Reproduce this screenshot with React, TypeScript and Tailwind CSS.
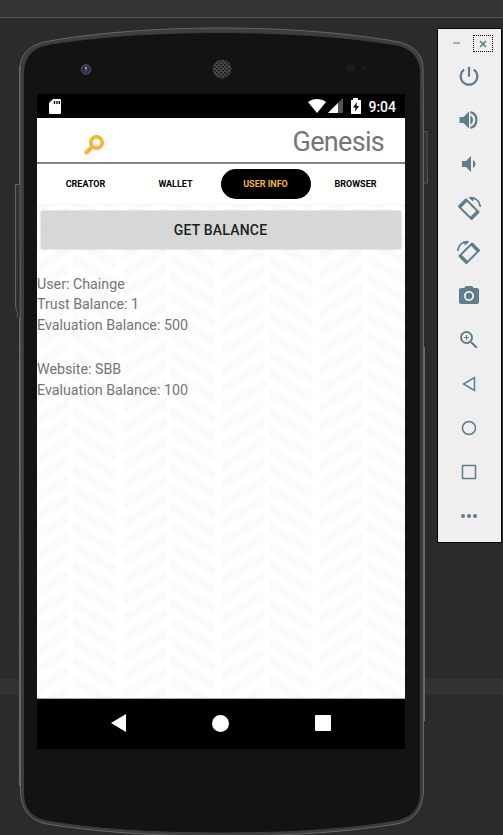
import type { ReactNode } from "react";
import { MdPhotoCamera, MdVolumeDown, MdZoomIn } from "react-icons/md";

function PhoneShell() {
  const outline =
    "M222 28 C286 28 350 33 399 42 C415 46 422 55 423 66 L423.5 130 L423.5 790 C423 810 414 820 399 823.5 C350 832 286 836 222 836 C155 836 95 832 44 823.5 C29 819 21 810 20.5 790 L20 66 C21 55 28 46 44 42 C92 33 155 28 222 28 Z";
  const face =
    "M222 32.500 C286 32.500 348 36.500 397 45 C411 48 419 57 420.500 70 L420.500 795 C420 809 411 818 397 821 C348 829.500 286 833 222 833 C155 833 95 829.500 46 821 C32 818 24 809 23.500 795 L23.500 70 C25 57 32 48 46 45 C95 36.500 155 32.500 222 32.500 Z";
  return (
    <svg className="absolute left-0 top-0" width="503" height="835" viewBox="0 0 503 835">
      <defs>
        <pattern id="mesh" width="4" height="4" patternUnits="userSpaceOnUse">
          <rect width="4" height="4" fill="#484848" />
          <rect width="1.600" height="1.400" fill="#111" />
          <rect x="2" y="2" width="1.600" height="1.400" fill="#111" />
        </pattern>
      </defs>
      <path d="M19.500 184.500 H15.500 V306 L17.500 313 V317" fill="#333" stroke="#606060" />
      <path d="M424 131.500 H427 V169 L427.500 170 V183 H424" fill="#333" stroke="#555" />
      <path d="M424.500 347 V721 M19.500 66 V184 M19.500 317 V786" stroke="#6c6c6c" />
      <path d={outline} fill="#3e3e3f" stroke="#666" strokeWidth="1" />
      <path d={face} fill="#131313" stroke="#3c3c3e" strokeWidth="1.200" />
      <circle cx="86" cy="69.500" r="5" fill="#3d3d3f" stroke="#4a4a4a" strokeWidth="0.700" />
      <circle cx="86" cy="69.500" r="3" fill="#20203c" />
      <circle cx="86" cy="70" r="1.900" fill="#3a3aa8" />
      <circle cx="86" cy="68" r="1.100" fill="#b5b5b5" />
      <circle cx="222" cy="69" r="9.300" fill="url(#mesh)" stroke="#343434" strokeWidth="0.500" />
      <circle cx="350.500" cy="68" r="3.800" fill="#1d1d1d" />
      <circle cx="363.500" cy="68" r="2.300" fill="#1d1d1d" />
    </svg>
  );
}

function Herringbone() {
  return (
    <svg className="absolute inset-x-0 top-0" width="368" height="493" viewBox="37 205 368 493">
      <defs>
        <pattern id="chevrons" x="123.500" y="403.500" width="98.200" height="19.150" patternUnits="userSpaceOnUse">
          {[-1, 0, 1, 2, 3].map((n) => (
            <g key={n} fill="#fafafa" transform={`translate(0 ${n * 19.15})`}>
              <path d="M0 0 L42.700 -25 V-14.800 L0 10.200 Z" />
              <path d="M47.700 -35.100 L90.700 -10.100 V0.100 L47.700 -24.900 Z" />
            </g>
          ))}
        </pattern>
      </defs>
      <rect x="37" y="205" width="368" height="493" fill="url(#chevrons)" />
    </svg>
  );
}

function StatusBar() {
  return (
    <div className="flex h-6 items-center bg-black pl-3 pr-[9px] text-white">
      <svg width="12" height="15" viewBox="0 0 12 15">
        <path fill="#fff" d="M4 0H11Q12 0 12 1V14Q12 15 11 15H1Q0 15 0 14V4Z" />
        <path d="M5.500 2V5M8 2V5M10.300 2V5" stroke="#000" strokeWidth="1.300" />
      </svg>
      <svg className="ml-auto" width="53" height="16" viewBox="0 0 53 16">
        <path fill="#fff" d="M0 4C5 0 13 0 18 4L9 15Z" />
        <path fill="#555" d="M35 0V15H20Z" />
        <path fill="#fff" d="M30 5V15H20Z" />
        <path fill="#fff" d="M43 2H45V0H50V2H53V16H43Z" />
        <path fill="#000" d="M49 4L45 9.500H47.500L47 13.500L51 8H48.500Z" />
      </svg>
      <span className="ml-[7px] pt-px text-[14px] font-medium leading-6">9:04</span>
    </div>
  );
}

function Tab({ label, active = false }: { label: string; active?: boolean }) {
  return (
    <div
      className={`flex h-[30px] w-[90px] items-center justify-center rounded-full pt-px text-[9px] font-bold ${
        active ? "bg-black text-[#f5b52e]" : "text-black"
      }`}
    >
      {label}
    </div>
  );
}

function Screen() {
  return (
    <div className="ml-[37px] mt-[76px] flex h-[655px] w-[368px] shrink-0 flex-col bg-white">
      <StatusBar />
      <header className="flex h-[46px] items-center justify-between border-b-2 border-[#858585] pl-[47px] pr-[21px]">
        <svg className="mt-[9px]" width="20" height="20" viewBox="0 0 20 20" fill="none" stroke="#f5b52e">
          <circle cx="12.500" cy="7.500" r="5.700" strokeWidth="3.700" />
          <path d="M8 12L2.500 17.500" strokeWidth="4" strokeLinecap="round" />
        </svg>
        <h1 className="pt-1 text-[27px] leading-[44px] tracking-[-0.700px] text-[#757575]">Genesis</h1>
      </header>
      <nav className="flex h-10 items-center pl-[3.500px]">
        <Tab label="CREATOR" />
        <Tab label="WALLET" />
        <Tab label="USER INFO" active />
        <Tab label="BROWSER" />
      </nav>
      <main className="relative h-[495px] border-b border-t border-b-[#aaa] border-t-[#f6f6f8]">
        <Herringbone />
        <div className="relative pt-[6px]">
          <button className="ml-[3.500px] block h-[38px] w-[360px] rounded-[2px] bg-[#d6d8d7] pt-px text-[14px] font-medium tracking-[0.200px] text-[#202020] shadow-[0_0_2px_#aaa]">
            GET BALANCE
          </button>
          <div className="mt-[25px] text-[14.250px] leading-[20.400px] text-[#757575]">
            <p>User: Chainge</p>
            <p>Trust Balance: 1</p>
            <p>Evaluation Balance: 500</p>
            <p className="mt-6">Website: SBB</p>
            <p>Evaluation Balance: 100</p>
          </div>
        </div>
      </main>
      <footer className="flex h-[50px] items-center justify-between bg-black pb-[2px] pl-[74px] pr-[74px]">
        <svg width="15" height="18" viewBox="0 0 15 18"><path d="M15 0V18L0 9Z" fill="#fff" /></svg>
        <div className="h-[17px] w-[17px] rounded-full bg-white" />
        <div className="h-4 w-4 rounded-[1px] bg-white" />
      </footer>
    </div>
  );
}

function PowerIcon() {
  return (
    <svg width="20" height="20" viewBox="0 0 20 20" fill="none" stroke="#607d8b" strokeWidth="2.200">
      <path d="M10 0.800V10.700M5.200 3.600A8.300 8.300 0 1 0 14.800 3.600" />
    </svg>
  );
}

function VolumeUpIcon() {
  return (
    <svg width="20" height="20" viewBox="0 0 20 20" fill="#607d8b">
      <path d="M0.500 7H4.500L10 1.500V18.500L4.500 13H0.500ZM11.300 5.500A5 5 0 0 1 11.300 14.500Z" />
      <path d="M11.500 2.200A8.100 8.100 0 0 1 11.500 17.800" fill="none" stroke="#607d8b" strokeWidth="2.300" />
    </svg>
  );
}

function RotateIcon({ flipped = false }: { flipped?: boolean }) {
  return (
    <svg width="24" height="24" viewBox="0 0 24 24" fill="none" stroke="#607d8b" className={flipped ? "-scale-x-100" : ""}>
      <path d="M2 10.500L9 3.500L21.500 16L14.500 23Z" strokeWidth="2" strokeLinejoin="round" />
      <path d="M2.500 11L9.500 4M14 22.500L21 15.500" strokeWidth="3.200" />
      <path d="M12.500 1.700C18 1.200 23 5 23.300 11M12.500 1.700L16.500 4.500" strokeWidth="1.600" />
    </svg>
  );
}

function ToolItem({ children }: { children: ReactNode }) {
  return <div className="flex h-11 items-center justify-center">{children}</div>;
}

function Toolbar() {
  return (
    <aside className="ml-8 mt-[10px] h-[515px] w-[65px] shrink-0 border border-black bg-[#efefef] text-[#607d8b]">
      <div className="flex h-[25px] pl-[15px] pt-[6px]">
        <span className="mt-[7px] h-[2px] w-[7px] bg-[#a0b1ba]" />
        <span className="ml-[13px] flex h-[17px] w-5 items-center justify-center border border-dotted border-black">
          <svg width="8" height="8" viewBox="0 0 8 8"><path d="M1 1L7 7M7 1L1 7" stroke="#607d8b" strokeWidth="1.700" /></svg>
        </span>
      </div>
      <div className="-ml-[2px]">
        <ToolItem><PowerIcon /></ToolItem>
        <ToolItem><VolumeUpIcon /></ToolItem>
        <ToolItem><MdVolumeDown size={24} /></ToolItem>
        <ToolItem><RotateIcon /></ToolItem>
        <ToolItem><RotateIcon flipped /></ToolItem>
        <ToolItem><MdPhotoCamera size={24} /></ToolItem>
        <ToolItem><MdZoomIn size={24} /></ToolItem>
        <ToolItem>
          <svg width="14" height="16" viewBox="0 0 14 16"><path d="M12.500 1.500V14.500L1.500 8Z" fill="none" stroke="#607d8b" strokeWidth="1.500" /></svg>
        </ToolItem>
        <ToolItem>
          <svg width="16" height="16" viewBox="0 0 16 16"><circle cx="8" cy="8" r="6.500" fill="none" stroke="#607d8b" strokeWidth="1.500" /></svg>
        </ToolItem>
        <ToolItem>
          <svg width="16" height="16" viewBox="0 0 16 16"><rect x="1.500" y="1.500" width="13" height="13" rx="0.500" fill="none" stroke="#607d8b" strokeWidth="1.500" /></svg>
        </ToolItem>
        <ToolItem>
          <div className="flex gap-[2px]">
            <span className="h-1 w-1 rounded-full bg-[#607d8b]" />
            <span className="h-1 w-1 rounded-full bg-[#607d8b]" />
            <span className="h-1 w-1 rounded-full bg-[#607d8b]" />
          </div>
        </ToolItem>
      </div>
    </aside>
  );
}

export default function App() {
  return (
    <div className="relative flex h-[835px] w-[503px] flex-col overflow-hidden bg-[#2b2b2b] font-['Roboto',sans-serif]">
      <div className="h-[18px] shrink-0 border-b border-[#555] bg-[#313335]" />
      <div className="absolute left-0 top-[679px] h-4 w-full bg-[#323232]" />
      <PhoneShell />
      <div className="relative flex items-start">
        <Screen />
        <Toolbar />
      </div>
    </div>
  );
}
